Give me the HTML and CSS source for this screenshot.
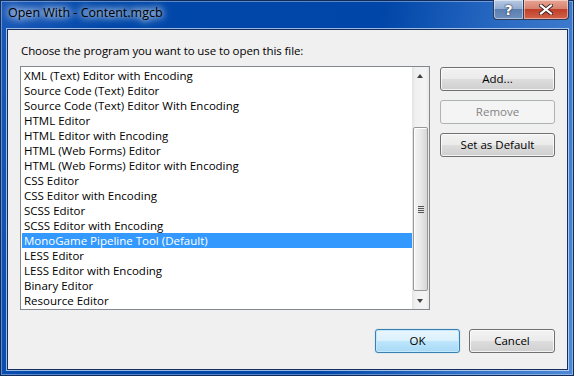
FILE: index.html
```html
<!DOCTYPE html>
<html lang="en">
<head>
    <meta charset="utf-8" />
    <title>Open With - Content.mgcb</title>
    <link rel="stylesheet" href="styles.css">
</head>
<body>

    <!-- Window frame -->
    <div class="window">
        <div class="titlebar">
            <span class="title">Open With - Content.mgcb</span>
            <div class="caption-btns">
                <button class="cap cap-help">?</button>
                <button class="cap cap-close">
                    <svg width="14" height="11" viewBox="0 0 14 11">
                        <path d="M2 1.5 L12 9.5 M12 1.5 L2 9.5" stroke="#3b2320" stroke-width="4" stroke-linecap="square" />
                        <path d="M2 1.5 L12 9.5 M12 1.5 L2 9.5" stroke="#ffffff" stroke-width="2.2" stroke-linecap="square" />
                    </svg>
                </button>
            </div>
        </div>

        <!-- Dialog body -->
        <div class="client">
            <p class="prompt">Choose the program you want to use to open this file:</p>

            <div class="main">
                <div class="listbox">
                    <ul class="items">
                        <li>XML (Text) Editor with Encoding</li>
                        <li>Source Code (Text) Editor</li>
                        <li>Source Code (Text) Editor With Encoding</li>
                        <li>HTML Editor</li>
                        <li>HTML Editor with Encoding</li>
                        <li>HTML (Web Forms) Editor</li>
                        <li>HTML (Web Forms) Editor with Encoding</li>
                        <li>CSS Editor</li>
                        <li>CSS Editor with Encoding</li>
                        <li>SCSS Editor</li>
                        <li>SCSS Editor with Encoding</li>
                        <li class="selected">MonoGame Pipeline Tool (Default)</li>
                        <li>LESS Editor</li>
                        <li>LESS Editor with Encoding</li>
                        <li>Binary Editor</li>
                        <li>Resource Editor</li>
                    </ul>
                    <div class="scrollbar">
                        <div class="arrow arrow-up"></div>
                        <div class="track">
                            <div class="thumb"><span class="grip"></span></div>
                        </div>
                        <div class="arrow arrow-down"></div>
                    </div>
                </div>

                <div class="side-btns">
                    <button class="btn">Add...</button>
                    <button class="btn" disabled>Remove</button>
                    <button class="btn">Set as Default</button>
                </div>
            </div>

            <div class="footer">
                <button class="btn btn-default">OK</button>
                <button class="btn btn-cancel">Cancel</button>
            </div>
        </div>
    </div>

</body>
</html>
```
FILE: styles.css
```css
body {
    margin: 0;
    padding: 0;
    font-family: 'Open Sans', 'Noto Sans', sans-serif;
    font-size: 11.5px;
}

.window {
    width: 574px;
    height: 376px;
    box-sizing: border-box;
    padding: 0 6px 6px 7px;
    display: flex;
    flex-direction: column;
    background: linear-gradient(100deg, #1a58b8 0%, #0047aa 18%, #0046a8 60%, #2c6cc4 80%, #4f88d6 100%);
    box-shadow: inset 0 0 0 1px #0f2c5c, inset 0 0 0 2px rgba(255,255,255,0.35);
}

/* Title bar */
.titlebar {
    height: 29px;
    display: flex;
    justify-content: space-between;
    align-items: flex-start;
    flex-shrink: 0;
}

.title {
    margin: 5px 0 0 1px;
    line-height: 16px;
    font-size: 12.5px;
    color: #000;
    text-shadow: 0 0 6px #fff, 0 0 10px rgba(255,255,255,0.9), 0 0 14px rgba(255,255,255,0.6);
}

.caption-btns {
    display: flex;
    margin-right: -1px;
}

.cap {
    height: 20px;
    border: 1px solid #2c3b57;
    border-top: none;
    padding: 0;
    margin: 0;
    display: flex;
    align-items: center;
    justify-content: center;
    box-shadow: inset 0 0 0 1px rgba(255,255,255,0.45);
}

.cap-help {
    width: 30px;
    border-radius: 0 0 0 4px;
    border-right: none;
    background: linear-gradient(#b9cbe4 0%, #93acd0 45%, #5d7fb0 50%, #6d90c0 100%);
    color: #fff;
    font: bold 14px 'DejaVu Sans', sans-serif;
    line-height: 1;
    text-shadow: 0 0 2px #1c2b45, 0 0 1px #1c2b45;
}

.cap-close {
    width: 46px;
    border-radius: 0 0 4px 0;
    background: linear-gradient(#e8a493 0%, #d88270 45%, #c0402a 50%, #d3624a 100%);
}

/* Dialog client area */
.client {
    flex: 1;
    background-color: #f0f0f0;
    border: 1px solid #142f5e;
    box-shadow: 0 0 0 1px rgba(220,232,250,0.7);
    padding: 13px 12px 16px 12px;
    display: flex;
    flex-direction: column;
}

.prompt {
    margin: 0 0 7px 1px;
    line-height: 16px;
    letter-spacing: -0.1px;
    color: #000;
}

.main {
    display: flex;
    gap: 10px;
}

/* List box */
.listbox {
    width: 410px;
    height: 244px;
    box-sizing: border-box;
    border: 1px solid #828790;
    background-color: #ffffff;
    display: flex;
}

.items {
    list-style: none;
    margin: 0;
    padding: 1px 0 0 1px;
    flex: 1;
}

.items li {
    height: 15px;
    line-height: 15px;
    padding-left: 2px;
    color: #000;
    white-space: nowrap;
}

.items li.selected {
    background-color: #3399ff;
    color: #ffffff;
}

.scrollbar {
    width: 17px;
    display: flex;
    flex-direction: column;
    background: linear-gradient(90deg, #e3e3e3 0%, #f0f0f0 20%, #f4f4f4 80%, #e8e8e8 100%);
}

.arrow {
    height: 17px;
    position: relative;
}

.arrow::after {
    content: "";
    position: absolute;
    left: 5px;
    width: 0;
    height: 0;
    border-left: 3.5px solid transparent;
    border-right: 3.5px solid transparent;
}

.arrow-up::after {
    top: 7px;
    border-bottom: 4px solid #404040;
}

.arrow-down::after {
    top: 7px;
    border-top: 4px solid #404040;
}

.track {
    flex: 1;
    display: flex;
    flex-direction: column;
}

.thumb {
    margin: auto 1px 1px 1px;
    height: 162px;
    border: 1px solid #979797;
    border-radius: 2px;
    background: linear-gradient(90deg, #f5f5f5 0%, #e9e9e9 50%, #d6d6d6 100%);
    box-shadow: inset 1px 1px 0 #ffffff;
    display: flex;
    align-items: center;
    justify-content: center;
}

.grip {
    width: 6px;
    height: 7px;
    background: repeating-linear-gradient(#555555 0px, #555555 1px, #e6e6e6 1px, #e6e6e6 2px);
}

/* Buttons */
.side-btns {
    display: flex;
    flex-direction: column;
    gap: 9px;
    padding-top: 1px;
}

.btn {
    width: 115px;
    height: 24px;
    box-sizing: border-box;
    border: 1px solid #707070;
    border-radius: 3px;
    background: linear-gradient(#f2f2f2 0%, #ebebeb 50%, #dddddd 50%, #cfcfcf 100%);
    box-shadow: inset 0 0 0 1px rgba(255,255,255,0.75);
    font-family: 'Open Sans', 'Noto Sans', sans-serif;
    font-size: 11.5px;
    color: #000;
    padding: 0;
    line-height: 20px;
}

    .btn:disabled {
        border-color: #adb2b5;
        background: #f4f4f4;
        color: #838383;
        box-shadow: none;
    }

.footer {
    margin-top: 19px;
    display: flex;
    justify-content: flex-end;
    gap: 9px;
}

.btn-default {
    width: 85px;
    border-color: #3c7fb1;
    background: linear-gradient(#eaf6fd 0%, #d9f0fc 50%, #bee6fd 50%, #a7d9f5 100%);
    box-shadow: inset 0 0 0 1px #c4e8fb, 0 0 1px #5fb2e6;
}

.btn-cancel {
    width: 86px;
}
```
